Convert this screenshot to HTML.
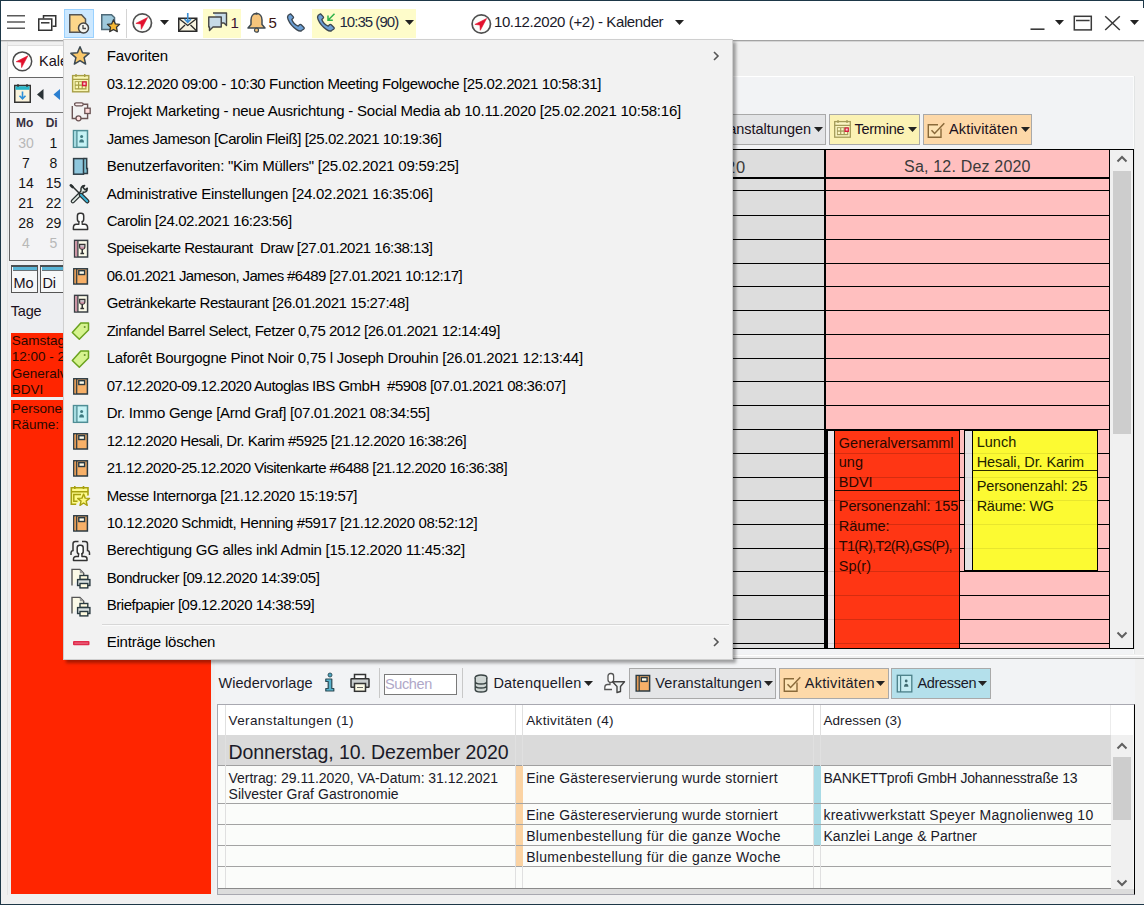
<!DOCTYPE html>
<html><head><meta charset="utf-8"><style>
html,body{margin:0;padding:0;}
body{width:1144px;height:905px;overflow:hidden;position:relative;font-family:"Liberation Sans",sans-serif;}
.a{position:absolute;}
.t{position:absolute;white-space:pre;line-height:20px;}
svg.a{overflow:visible;}
</style></head><body>
<div class="a" style="left:0px;top:0px;width:1144px;height:905px;background:#f0f0f0;"></div>
<div class="a" style="left:1px;top:1px;width:1143px;height:39px;background:#ffffff;"></div>
<div class="a" style="left:1px;top:40px;width:1143px;height:1px;background:#a3a3a3;"></div>
<div class="a" style="left:1px;top:41px;width:1143px;height:1px;background:#d6d6d6;"></div>
<div class="a" style="left:215px;top:76px;width:920px;height:578px;background:#f2f3f5;"></div>
<div class="a" style="left:215px;top:76px;width:920px;height:1px;background:#ffffff;"></div>
<div class="a" style="left:1133px;top:76px;width:1px;height:578px;background:#fafbfb;"></div>
<div class="a" style="left:1134px;top:76px;width:1px;height:578px;background:#e2e4e4;"></div>
<div class="a" style="left:600px;top:114px;width:226px;height:31px;background:#e3e4e6;border:1px solid #a9a9a9;box-sizing:border-box;"></div>
<div class="a" style="left:829px;top:114px;width:91px;height:31px;background:#fbf2b4;border:1px solid #a9a9a9;box-sizing:border-box;"></div>
<div class="a" style="left:923px;top:114px;width:109px;height:31px;background:#fdd8a8;border:1px solid #a9a9a9;box-sizing:border-box;"></div>
<div class="a" style="left:250px;top:149px;width:884px;height:500px;background:#000;"></div>
<div class="a" style="left:251px;top:150px;width:573px;height:498px;background:#dddddd;"></div>
<div class="a" style="left:826px;top:150px;width:283px;height:498px;background:#ffbfbf;"></div>
<div class="a" style="left:1110px;top:150px;width:23px;height:498px;background:#f0f0f0;"></div>
<div class="a" style="left:1113px;top:171px;width:18px;height:263px;background:#cdcdcd;"></div>
<div class="a" style="left:250px;top:177px;width:859px;height:2px;background:#000;"></div>
<div class="a" style="left:250px;top:190px;width:859px;height:1px;background:#000;"></div>
<div class="a" style="left:250px;top:215px;width:859px;height:1px;background:#000;"></div>
<div class="a" style="left:250px;top:239px;width:859px;height:1px;background:#000;"></div>
<div class="a" style="left:250px;top:263px;width:859px;height:1px;background:#000;"></div>
<div class="a" style="left:250px;top:286px;width:859px;height:1px;background:#000;"></div>
<div class="a" style="left:250px;top:310px;width:859px;height:1px;background:#000;"></div>
<div class="a" style="left:250px;top:334px;width:859px;height:1px;background:#000;"></div>
<div class="a" style="left:250px;top:358px;width:859px;height:1px;background:#000;"></div>
<div class="a" style="left:250px;top:381px;width:859px;height:1px;background:#000;"></div>
<div class="a" style="left:250px;top:405px;width:859px;height:1px;background:#000;"></div>
<div class="a" style="left:250px;top:429px;width:859px;height:1px;background:#000;"></div>
<div class="a" style="left:250px;top:453px;width:859px;height:1px;background:#000;"></div>
<div class="a" style="left:250px;top:477px;width:859px;height:1px;background:#000;"></div>
<div class="a" style="left:250px;top:500px;width:859px;height:1px;background:#000;"></div>
<div class="a" style="left:250px;top:524px;width:859px;height:1px;background:#000;"></div>
<div class="a" style="left:250px;top:548px;width:859px;height:1px;background:#000;"></div>
<div class="a" style="left:250px;top:571px;width:859px;height:1px;background:#000;"></div>
<div class="a" style="left:250px;top:595px;width:859px;height:1px;background:#000;"></div>
<div class="a" style="left:250px;top:619px;width:859px;height:1px;background:#000;"></div>
<div class="a" style="left:250px;top:643px;width:859px;height:1px;background:#000;"></div>
<svg class="a" style="left:1115px;top:152px" width="14" height="14" viewBox="0 0 14 14"><path d="M2.5 9.5 L7 5 L11.5 9.5" fill="none" stroke="#606060" stroke-width="2"/></svg>
<svg class="a" style="left:1115px;top:628px" width="14" height="14" viewBox="0 0 14 14"><path d="M2.5 4.5 L7 9 L11.5 4.5" fill="none" stroke="#606060" stroke-width="2"/></svg>
<div class="a" style="left:212px;top:655px;width:932px;height:1px;background:#ffffff;"></div>
<div class="a" style="left:212px;top:658px;width:932px;height:1px;background:#a0a0a0;"></div>
<div class="a" style="left:215px;top:659px;width:920px;height:236px;background:#f2f3f5;"></div>
<div class="a" style="left:629px;top:668px;width:147px;height:31px;background:#e4e5e7;border:1px solid #a9a9a9;box-sizing:border-box;"></div>
<div class="a" style="left:779px;top:668px;width:110px;height:31px;background:#fdd9a9;border:1px solid #a9a9a9;box-sizing:border-box;"></div>
<div class="a" style="left:891px;top:668px;width:100px;height:31px;background:#b4e0eb;border:1px solid #a9a9a9;box-sizing:border-box;"></div>
<div class="a" style="left:379px;top:668px;width:1px;height:30px;background:#c8c8c8;"></div>
<div class="a" style="left:462px;top:668px;width:1px;height:30px;background:#c8c8c8;"></div>
<div class="a" style="left:384px;top:674px;width:73px;height:21px;background:#ffffff;border:1px solid #7a7a7a;box-sizing:border-box;"></div>
<div class="a" style="left:217px;top:704px;width:918px;height:191px;background:#f8f8f6;border:1px solid #a8a8b0;box-sizing:border-box;border-right:1px solid #000;"></div>
<div class="a" style="left:218px;top:705px;width:915px;height:30px;background:#ffffff;"></div>
<div class="a" style="left:1110px;top:705px;width:1px;height:30px;background:#ececec;"></div>
<div class="a" style="left:218px;top:735px;width:893px;height:30px;background:#dadada;"></div>
<div class="a" style="left:218px;top:765px;width:893px;height:1px;background:#a0a0a0;"></div>
<div class="a" style="left:218px;top:766px;width:893px;height:37px;background:#fbfcfa;"></div>
<div class="a" style="left:218px;top:804px;width:893px;height:20px;background:#fbfcfa;"></div>
<div class="a" style="left:218px;top:825px;width:893px;height:20px;background:#fbfcfa;"></div>
<div class="a" style="left:218px;top:846px;width:893px;height:20px;background:#fbfcfa;"></div>
<div class="a" style="left:218px;top:867px;width:893px;height:21px;background:#fbfcfa;"></div>
<div class="a" style="left:218px;top:803px;width:893px;height:1px;background:#a3a3a3;"></div>
<div class="a" style="left:218px;top:824px;width:893px;height:1px;background:#a3a3a3;"></div>
<div class="a" style="left:218px;top:845px;width:893px;height:1px;background:#a3a3a3;"></div>
<div class="a" style="left:218px;top:866px;width:893px;height:1px;background:#a3a3a3;"></div>
<div class="a" style="left:218px;top:888px;width:893px;height:1px;background:#8a8a8a;"></div>
<div class="a" style="left:218px;top:889px;width:916px;height:5px;background:#dcdcdc;"></div>
<div class="a" style="left:225px;top:705px;width:1px;height:183px;background:#e0e0e0;"></div>
<div class="a" style="left:515px;top:705px;width:1px;height:183px;background:#e0e0e0;"></div>
<div class="a" style="left:522px;top:705px;width:1px;height:183px;background:#e0e0e0;"></div>
<div class="a" style="left:813px;top:705px;width:1px;height:183px;background:#e0e0e0;"></div>
<div class="a" style="left:820px;top:705px;width:1px;height:183px;background:#e0e0e0;"></div>
<div class="a" style="left:516px;top:766px;width:7px;height:100px;background:#fbd3a3;"></div>
<div class="a" style="left:516px;top:803px;width:7px;height:1px;background:#a3a3a3;"></div>
<div class="a" style="left:516px;top:824px;width:7px;height:1px;background:#a3a3a3;"></div>
<div class="a" style="left:516px;top:845px;width:7px;height:1px;background:#a3a3a3;"></div>
<div class="a" style="left:814px;top:766px;width:7px;height:79px;background:#a8dbe6;"></div>
<div class="a" style="left:814px;top:803px;width:7px;height:1px;background:#a3a3a3;"></div>
<div class="a" style="left:814px;top:824px;width:7px;height:1px;background:#a3a3a3;"></div>
<div class="a" style="left:1111px;top:735px;width:22px;height:154px;background:#f0f0f0;"></div>
<div class="a" style="left:1113px;top:757px;width:18px;height:63px;background:#cdcdcd;"></div>
<svg class="a" style="left:1115px;top:739px" width="14" height="14" viewBox="0 0 14 14"><path d="M2.5 9.5 L7 5 L11.5 9.5" fill="none" stroke="#606060" stroke-width="2"/></svg>
<svg class="a" style="left:1115px;top:876px" width="14" height="14" viewBox="0 0 14 14"><path d="M2.5 4.5 L7 9 L11.5 4.5" fill="none" stroke="#606060" stroke-width="2"/></svg>
<div class="t" style="left:904.10px;top:157.16px;font-size:16px;color:#3a3a3a;letter-spacing:0.184px;">Sa, 12. Dez 2020</div>
<div class="t" style="left:613.40px;top:156.98px;font-size:16.5px;color:#3a3a3a;letter-spacing:0.729px;">Fr, 11. Dez 2020</div>
<div class="a" style="left:826px;top:430px;width:134px;height:218px;background:#000;"></div>
<div class="a" style="left:828px;top:431px;width:6px;height:217px;background:#ebe6ea;"></div>
<div class="a" style="left:835px;top:431px;width:124px;height:217px;background:#ff3614;"></div>
<div class="a" style="left:835px;top:490px;width:124px;height:1px;background:#2a0a00;"></div>
<div class="a" style="left:835px;top:453px;width:124px;height:1px;background:rgba(0,0,0,0.16);"></div>
<div class="a" style="left:828px;top:453px;width:6px;height:1px;background:rgba(0,0,0,0.10);"></div>
<div class="a" style="left:835px;top:477px;width:124px;height:1px;background:rgba(0,0,0,0.16);"></div>
<div class="a" style="left:828px;top:477px;width:6px;height:1px;background:rgba(0,0,0,0.10);"></div>
<div class="a" style="left:835px;top:500px;width:124px;height:1px;background:rgba(0,0,0,0.16);"></div>
<div class="a" style="left:828px;top:500px;width:6px;height:1px;background:rgba(0,0,0,0.10);"></div>
<div class="a" style="left:835px;top:524px;width:124px;height:1px;background:rgba(0,0,0,0.16);"></div>
<div class="a" style="left:828px;top:524px;width:6px;height:1px;background:rgba(0,0,0,0.10);"></div>
<div class="a" style="left:835px;top:548px;width:124px;height:1px;background:rgba(0,0,0,0.16);"></div>
<div class="a" style="left:828px;top:548px;width:6px;height:1px;background:rgba(0,0,0,0.10);"></div>
<div class="a" style="left:835px;top:571px;width:124px;height:1px;background:rgba(0,0,0,0.16);"></div>
<div class="a" style="left:828px;top:571px;width:6px;height:1px;background:rgba(0,0,0,0.10);"></div>
<div class="a" style="left:835px;top:595px;width:124px;height:1px;background:rgba(0,0,0,0.16);"></div>
<div class="a" style="left:828px;top:595px;width:6px;height:1px;background:rgba(0,0,0,0.10);"></div>
<div class="a" style="left:835px;top:619px;width:124px;height:1px;background:rgba(0,0,0,0.16);"></div>
<div class="a" style="left:828px;top:619px;width:6px;height:1px;background:rgba(0,0,0,0.10);"></div>
<div class="a" style="left:835px;top:643px;width:124px;height:1px;background:rgba(0,0,0,0.16);"></div>
<div class="a" style="left:828px;top:643px;width:6px;height:1px;background:rgba(0,0,0,0.10);"></div>
<div class="a" style="left:826px;top:648px;width:134px;height:1px;background:#000;"></div>
<div class="t" style="left:838.80px;top:432.58px;font-size:14.5px;color:#2a0800;letter-spacing:0.027px;">Generalversamml</div>
<div class="t" style="left:838.80px;top:451.98px;font-size:14.5px;color:#2a0800;letter-spacing:0.000px;">ung</div>
<div class="t" style="left:838.80px;top:471.98px;font-size:14.5px;color:#2a0800;letter-spacing:0.000px;">BDVI</div>
<div class="t" style="left:838.80px;top:495.68px;font-size:14.5px;color:#2a0800;letter-spacing:-0.089px;">Personenzahl: 155</div>
<div class="t" style="left:838.80px;top:516.18px;font-size:14.5px;color:#2a0800;letter-spacing:0.000px;">Räume:</div>
<div class="t" style="left:838.80px;top:536.48px;font-size:14.5px;color:#2a0800;letter-spacing:-0.745px;">T1(R),T2(R),GS(P),</div>
<div class="t" style="left:838.80px;top:555.98px;font-size:14.5px;color:#2a0800;letter-spacing:0.000px;">Sp(r)</div>
<div class="a" style="left:964px;top:430px;width:134px;height:142px;background:#000;"></div>
<div class="a" style="left:965px;top:431px;width:6.5px;height:139px;background:#e4e2e4;"></div>
<div class="a" style="left:972.5px;top:431px;width:124px;height:139px;background:#fcfa32;"></div>
<div class="a" style="left:972px;top:470px;width:125px;height:1px;background:#2a2a00;"></div>
<div class="a" style="left:972.5px;top:453px;width:124px;height:1px;background:rgba(0,0,0,0.08);"></div>
<div class="a" style="left:965px;top:453px;width:6.5px;height:1px;background:rgba(0,0,0,0.08);"></div>
<div class="a" style="left:972.5px;top:477px;width:124px;height:1px;background:rgba(0,0,0,0.08);"></div>
<div class="a" style="left:965px;top:477px;width:6.5px;height:1px;background:rgba(0,0,0,0.08);"></div>
<div class="a" style="left:972.5px;top:500px;width:124px;height:1px;background:rgba(0,0,0,0.08);"></div>
<div class="a" style="left:965px;top:500px;width:6.5px;height:1px;background:rgba(0,0,0,0.08);"></div>
<div class="a" style="left:972.5px;top:524px;width:124px;height:1px;background:rgba(0,0,0,0.08);"></div>
<div class="a" style="left:965px;top:524px;width:6.5px;height:1px;background:rgba(0,0,0,0.08);"></div>
<div class="a" style="left:972.5px;top:548px;width:124px;height:1px;background:rgba(0,0,0,0.08);"></div>
<div class="a" style="left:965px;top:548px;width:6.5px;height:1px;background:rgba(0,0,0,0.08);"></div>
<div class="t" style="left:976.70px;top:432.28px;font-size:14.5px;color:#222200;letter-spacing:0.000px;">Lunch</div>
<div class="t" style="left:976.70px;top:451.98px;font-size:14.5px;color:#222200;letter-spacing:-0.093px;">Hesali, Dr. Karim</div>
<div class="t" style="left:976.70px;top:475.98px;font-size:14.5px;color:#222200;letter-spacing:-0.137px;">Personenzahl: 25</div>
<div class="t" style="left:976.70px;top:495.58px;font-size:14.5px;color:#222200;letter-spacing:-0.296px;">Räume: WG</div>
<div class="t" style="left:706.39px;top:118.98px;font-size:14.5px;color:#1a1020;letter-spacing:0.000px;">Veranstaltungen</div>
<svg class="a" style="left:814px;top:126.5px" width="9" height="5" viewBox="0 0 9 5"><path d="M0 0H9L4.5 5Z" fill="#222"/></svg>
<svg class="a" style="left:833px;top:119px" width="19" height="19" viewBox="0 0 19 19"><rect x="1.7" y="2.6" width="15.6" height="15.6" fill="#fbf6c4" stroke="#a49c5a" stroke-width="1.3"/><path d="M1.7 6.3H17.3M5 1V4M14 1V4" stroke="#a49c5a" stroke-width="1.3"/><rect x="3.9" y="8.2" width="11.4" height="8" fill="#a49c5a"/><rect x="4.8" y="9.1" width="2.3" height="2.3" fill="#fbf6c4"/><rect x="4.8" y="12.7" width="2.3" height="2.3" fill="#fbf6c4"/><rect x="8.3" y="9.1" width="2.3" height="2.3" fill="#fbf6c4"/><rect x="8.3" y="12.7" width="2.3" height="2.3" fill="#fbf6c4"/><rect x="11.8" y="9.1" width="2.3" height="2.3" fill="#fbf6c4"/><rect x="11.8" y="12.7" width="2.3" height="2.3" fill="#fbf6c4"/><rect x="11.5" y="8.4" width="4.4" height="4.6" fill="#d81b3c"/><rect x="12.7" y="9.6" width="2" height="2" fill="#f8d0d8"/></svg>
<div class="t" style="left:854.40px;top:118.98px;font-size:14.5px;color:#1a1020;letter-spacing:-0.230px;">Termine</div>
<svg class="a" style="left:908px;top:126.5px" width="9" height="5" viewBox="0 0 9 5"><path d="M0 0H9L4.5 5Z" fill="#222"/></svg>
<svg class="a" style="left:927px;top:120px" width="19" height="19" viewBox="0 0 19 19"><path d="M14 8.5V17.2H1.3V4.8H11" fill="#fde3b4" stroke="#8a6a3a" stroke-width="1.4"/><path d="M4.5 10.2L7.6 13.4L17.3 3.2" fill="none" stroke="#8a6a3a" stroke-width="1.5"/></svg>
<div class="t" style="left:948.90px;top:118.98px;font-size:14.5px;color:#1a1020;letter-spacing:0.179px;">Aktivitäten</div>
<svg class="a" style="left:1021px;top:126.5px" width="9" height="5" viewBox="0 0 9 5"><path d="M0 0H9L4.5 5Z" fill="#222"/></svg>
<div class="t" style="left:218.40px;top:673.18px;font-size:14.5px;color:#1a1a28;letter-spacing:0.058px;">Wiedervorlage</div>
<svg class="a" style="left:322px;top:671px" width="16" height="22" viewBox="0 0 16 22"><circle cx="8" cy="4" r="2" fill="#4aa3bf" stroke="#2a4a55" stroke-width="0.9"/><path d="M3.8 8H9.8V17.5H11.8V20H3.8V17.5H6.2V10.5H3.8Z" fill="#58b2cc" stroke="#2a4a55" stroke-width="1.2" stroke-linejoin="round"/></svg>
<svg class="a" style="left:350px;top:673px" width="20" height="20" viewBox="0 0 20 20"><rect x="4.5" y="1.5" width="11" height="5" fill="#fff" stroke="#333" stroke-width="1.5"/><rect x="1" y="5.8" width="18" height="8.5" rx="0.6" fill="#c9cdcd" stroke="#333" stroke-width="1.5"/><rect x="4.5" y="10.5" width="11" height="7.8" fill="#fdfbe6" stroke="#333" stroke-width="1.5"/><path d="M7 14.5H13" stroke="#666" stroke-width="1"/></svg>
<div class="t" style="left:384.90px;top:674.48px;font-size:14.5px;color:#b0a8c8;letter-spacing:-0.337px;">Suchen</div>
<svg class="a" style="left:474px;top:674px" width="14" height="19" viewBox="0 0 14 19"><ellipse cx="7" cy="3.5" rx="5.8" ry="2.5" fill="#cfd6d4" stroke="#3a4444" stroke-width="1.4"/><path d="M1.2 3.5V15.5C1.2 17 3.8 18 7 18C10.2 18 12.8 17 12.8 15.5V3.5M1.2 7.5C1.2 9 3.8 10 7 10C10.2 10 12.8 9 12.8 7.5M1.2 11.5C1.2 13 3.8 14 7 14C10.2 14 12.8 13 12.8 11.5" fill="#cfd6d4" stroke="#3a4444" stroke-width="1.4"/></svg>
<div class="t" style="left:493.40px;top:673.18px;font-size:14.5px;color:#1a1a28;letter-spacing:0.221px;">Datenquellen</div>
<svg class="a" style="left:584px;top:681px" width="9" height="5" viewBox="0 0 9 5"><path d="M0 0H9L4.5 5Z" fill="#222"/></svg>
<svg class="a" style="left:602px;top:671px" width="24" height="22" viewBox="0 0 24 22"><path d="M8 11V13.5H5.5C3.8 13.5 2.8 14.8 2.8 16.5V18.5H10" fill="#fff" stroke="#555" stroke-width="1.3"/><rect x="6" y="2.5" width="5.6" height="8.8" rx="2.5" fill="#fff" stroke="#555" stroke-width="1.3"/><path d="M10.5 10.8H22.5L18.5 15.5V20.5L15 21.5V15.5Z" fill="#eef2f2" stroke="#444" stroke-width="1.4" stroke-linejoin="round"/></svg>
<svg class="a" style="left:635px;top:674px" width="16" height="19" viewBox="0 0 16 19"><rect x="1.2" y="1.5" width="13.4" height="15.5" fill="#f7b068" stroke="#2b3a42" stroke-width="1.5"/><rect x="1.9" y="2.2" width="2.1" height="14.1" fill="#e49a55"/><path d="M4.2 1.5V17" stroke="#2b3a42" stroke-width="1.2"/><rect x="6.3" y="3.6" width="5.8" height="3.8" fill="#fffbe8" stroke="#2b3a42" stroke-width="1.4"/></svg>
<div class="t" style="left:655.30px;top:673.18px;font-size:14.5px;color:#1a1a28;letter-spacing:0.121px;">Veranstaltungen</div>
<svg class="a" style="left:764px;top:681px" width="9" height="5" viewBox="0 0 9 5"><path d="M0 0H9L4.5 5Z" fill="#222"/></svg>
<svg class="a" style="left:783px;top:674px" width="19" height="19" viewBox="0 0 19 19"><path d="M14 8.5V17.2H1.3V4.8H11" fill="#fde3b4" stroke="#8a6a3a" stroke-width="1.4"/><path d="M4.5 10.2L7.6 13.4L17.3 3.2" fill="none" stroke="#8a6a3a" stroke-width="1.5"/></svg>
<div class="t" style="left:804.80px;top:673.18px;font-size:14.5px;color:#1a1a28;letter-spacing:0.289px;">Aktivitäten</div>
<svg class="a" style="left:876px;top:681px" width="9" height="5" viewBox="0 0 9 5"><path d="M0 0H9L4.5 5Z" fill="#222"/></svg>
<svg class="a" style="left:896px;top:674px" width="18" height="20" viewBox="0 0 18 20"><rect x="1.3" y="1.3" width="14.5" height="16.6" fill="#c6ecf2" stroke="#4b7f88" stroke-width="1.3"/><path d="M4.6 1.3V17.9" stroke="#4b7f88" stroke-width="1.2"/><circle cx="10.2" cy="7" r="1.4" fill="#3f6a70"/><path d="M8 12.8C8 10.8 9 9.8 10.2 9.8C11.4 9.8 12.4 10.8 12.4 12.8Z" fill="#3f6a70"/></svg>
<div class="t" style="left:917.40px;top:673.18px;font-size:14.5px;color:#1a1a28;letter-spacing:-0.295px;">Adressen</div>
<svg class="a" style="left:978px;top:681px" width="9" height="5" viewBox="0 0 9 5"><path d="M0 0H9L4.5 5Z" fill="#222"/></svg>
<div class="t" style="left:228.50px;top:710.62px;font-size:13.5px;color:#1a1a28;letter-spacing:0.398px;">Veranstaltungen (1)</div>
<div class="t" style="left:526.20px;top:710.62px;font-size:13.5px;color:#1a1a28;letter-spacing:0.348px;">Aktivitäten (4)</div>
<div class="t" style="left:823.40px;top:710.62px;font-size:13.5px;color:#1a1a28;letter-spacing:0.082px;">Adressen (3)</div>
<div class="t" style="left:228.50px;top:742.04px;font-size:19.5px;color:#1a1a28;letter-spacing:-0.104px;">Donnerstag, 10. Dezember 2020</div>
<div class="t" style="left:228.50px;top:767.75px;font-size:14px;color:#1a1a28;letter-spacing:-0.038px;">Vertrag: 29.11.2020, VA-Datum: 31.12.2021</div>
<div class="t" style="left:228.50px;top:783.85px;font-size:14px;color:#1a1a28;letter-spacing:0.050px;">Silvester Graf Gastronomie</div>
<div class="t" style="left:526.20px;top:767.75px;font-size:14px;color:#1a1a28;letter-spacing:0.212px;">Eine Gästereservierung wurde storniert</div>
<div class="t" style="left:526.20px;top:805.15px;font-size:14px;color:#1a1a28;letter-spacing:0.212px;">Eine Gästereservierung wurde storniert</div>
<div class="t" style="left:526.20px;top:826.15px;font-size:14px;color:#1a1a28;letter-spacing:0.316px;">Blumenbestellung für die ganze Woche</div>
<div class="t" style="left:526.20px;top:847.15px;font-size:14px;color:#1a1a28;letter-spacing:0.316px;">Blumenbestellung für die ganze Woche</div>
<div class="t" style="left:823.40px;top:767.75px;font-size:14px;color:#1a1a28;letter-spacing:-0.167px;">BANKETTprofi GmbH Johannesstraße 13</div>
<div class="t" style="left:823.40px;top:805.15px;font-size:14px;color:#1a1a28;letter-spacing:0.281px;">kreativwerkstatt Speyer Magnolienweg 10</div>
<div class="t" style="left:823.40px;top:826.15px;font-size:14px;color:#1a1a28;letter-spacing:0.083px;">Kanzlei Lange &amp; Partner</div>
<svg class="a" style="left:7px;top:14px" width="18" height="16" viewBox="0 0 18 16"><path d="M0 1.7H18M0 8H18M0 14.3H18" stroke="#5a5a5a" stroke-width="1.5"/></svg>
<svg class="a" style="left:38px;top:15px" width="19" height="16" viewBox="0 0 19 16"><path d="M5.5 3.5V0.75H17.75V11.25H14.5" fill="none" stroke="#333" stroke-width="1.5"/><rect x="0.75" y="4" width="13" height="11.25" fill="#fff" stroke="#333" stroke-width="1.5"/><path d="M3 7.8H11.5" stroke="#333" stroke-width="1.5"/></svg>
<div class="a" style="left:64px;top:9px;width:30px;height:29px;background:#cce8ff;border:1px solid #99d1ff;box-sizing:border-box;"></div>
<svg class="a" style="left:69px;top:14px" width="21" height="20" viewBox="0 0 21 20"><path d="M0.75 0.75H12.5L16.5 5V18.25H0.75Z" fill="#fcd68a" stroke="#555" stroke-width="1.5"/><circle cx="14.5" cy="14" r="5" fill="#f5f5f0" stroke="#444" stroke-width="1.5"/><path d="M14 11V14.5H17" fill="none" stroke="#444" stroke-width="1.3"/></svg>
<svg class="a" style="left:101px;top:14px" width="20" height="20" viewBox="0 0 20 20"><path d="M0.75 0.75H10.5L13.5 3.5V15.5H0.75Z" fill="#9ec9dc" stroke="#4e6a78" stroke-width="1.5"/><path d="M12.5 5.8L14.4 9.9L18.6 10.4L15.5 13.3L16.3 17.6L12.5 15.5L8.7 17.6L9.5 13.3L6.4 10.4L10.6 9.9Z" fill="#f7b834" stroke="#333" stroke-width="1.3" stroke-linejoin="round"/></svg>
<div class="a" style="left:126px;top:9px;width:1px;height:29px;background:#d4d4d4;"></div>
<svg class="a" style="left:132px;top:13px" width="20" height="20" viewBox="0 0 20 20"><circle cx="10.3" cy="10" r="9.2" fill="#fbfdfb" stroke="#505050" stroke-width="1.7"/><path d="M15.6 4.5L3.9 10.4L8.9 11L9.3 16.3Z" fill="#e2102c" stroke="#e2102c" stroke-width="0.6" stroke-linejoin="round"/></svg>
<svg class="a" style="left:160px;top:20px" width="9" height="5" viewBox="0 0 9 5"><path d="M0 0H9L4.5 5Z" fill="#222"/></svg>
<svg class="a" style="left:178px;top:13px" width="20" height="20" viewBox="0 0 20 20"><rect x="0.75" y="5.25" width="18" height="13" fill="#f7f3e0" stroke="#2a2a2a" stroke-width="1.5"/><path d="M0.75 5.5L9.75 12.5L18.75 5.5M0.75 18L7 12M18.75 18L12.5 12" fill="none" stroke="#2a2a2a" stroke-width="1.3"/><path d="M9.75 0V9M6.5 6L9.75 9.3L13 6" fill="none" stroke="#3b8fd6" stroke-width="1.6"/></svg>
<div class="a" style="left:203px;top:9px;width:38px;height:29px;background:#fefcca;"></div>
<svg class="a" style="left:208px;top:12px" width="20" height="20" viewBox="0 0 20 20"><path d="M5 1H18.5V13.5L16 11H13" fill="#c7dbe8" stroke="#444" stroke-width="1.4" stroke-linejoin="round"/><path d="M0.75 5H13.25V15H5L1.5 18.5V15H0.75Z" fill="#c7dbe8" stroke="#444" stroke-width="1.4" stroke-linejoin="round"/></svg>
<div class="t" style="left:230.40px;top:12.80px;font-size:15px;color:#3a1432;letter-spacing:0.000px;">1</div>
<svg class="a" style="left:247px;top:12px" width="19" height="21" viewBox="0 0 19 21"><path d="M9.5 1.5C6 1.5 4 4.3 4 8V12.5L1 16H18L15 12.5V8C15 4.3 13 1.5 9.5 1.5Z" fill="#f6c57c" stroke="#3f4a52" stroke-width="1.5" stroke-linejoin="round"/><circle cx="9.5" cy="18.2" r="2" fill="#f6c57c" stroke="#3f4a52" stroke-width="1.2"/><circle cx="9.5" cy="1.6" r="1.2" fill="#3f4a52"/></svg>
<div class="t" style="left:268.40px;top:12.80px;font-size:15px;color:#3a1412;letter-spacing:0.000px;">5</div>
<svg class="a" style="left:287px;top:13px" width="19" height="19" viewBox="0 0 19 19"><path d="M3.5 0.8L6.2 3.6C6.7 4.1 6.6 4.8 6.1 5.3L4.8 6.5C5.8 9.3 8.2 11.9 11.2 13.1L12.5 11.8C13 11.3 13.7 11.3 14.2 11.8L17 14.5C17.4 14.9 17.3 15.5 16.9 15.9L14.6 17.6C13.6 18.3 11.8 18 9.6 16.6C5.9 14.2 2.6 10.4 1.1 6.6C0.3 4.6 0.4 3.1 1.2 2.2Z" fill="#6b9fd6" stroke="#3b4650" stroke-width="1.3" stroke-linejoin="round"/></svg>
<div class="a" style="left:312px;top:9px;width:104px;height:29px;background:#fefcca;"></div>
<svg class="a" style="left:317px;top:13px" width="19" height="19" viewBox="0 0 19 19"><path d="M3.5 0.8L6.2 3.6C6.7 4.1 6.6 4.8 6.1 5.3L4.8 6.5C5.8 9.3 8.2 11.9 11.2 13.1L12.5 11.8C13 11.3 13.7 11.3 14.2 11.8L17 14.5C17.4 14.9 17.3 15.5 16.9 15.9L14.6 17.6C13.6 18.3 11.8 18 9.6 16.6C5.9 14.2 2.6 10.4 1.1 6.6C0.3 4.6 0.4 3.1 1.2 2.2Z" fill="#6b9fd6" stroke="#3b4650" stroke-width="1.3" stroke-linejoin="round"/><path d="M17.5 0.8L11 7.3M11 2.5V7.3H15.8" fill="none" stroke="#2fb24a" stroke-width="1.5"/></svg>
<div class="t" style="left:339.40px;top:12.40px;font-size:15px;color:#1e2a40;letter-spacing:-0.955px;">10:35 (90)</div>
<svg class="a" style="left:405px;top:20px" width="9" height="5" viewBox="0 0 9 5"><path d="M0 0H9L4.5 5Z" fill="#222"/></svg>
<svg class="a" style="left:471px;top:14px" width="20" height="20" viewBox="0 0 20 20"><circle cx="10.3" cy="10" r="9.2" fill="#fbfdfb" stroke="#505050" stroke-width="1.7"/><path d="M15.6 4.5L3.9 10.4L8.9 11L9.3 16.3Z" fill="#e2102c" stroke="#e2102c" stroke-width="0.6" stroke-linejoin="round"/></svg>
<div class="t" style="left:494.00px;top:12.20px;font-size:15px;color:#1a1a2a;letter-spacing:-0.405px;">10.12.2020 (+2) - Kalender</div>
<svg class="a" style="left:675px;top:20px" width="9" height="5" viewBox="0 0 9 5"><path d="M0 0H9L4.5 5Z" fill="#222"/></svg>
<svg class="a" style="left:1030px;top:27px" width="15" height="4" viewBox="0 0 15 4"><path d="M0.5 2.2H14.5" stroke="#3a3a3a" stroke-width="1.6"/></svg>
<svg class="a" style="left:1055px;top:20px" width="9" height="5" viewBox="0 0 9 5"><path d="M0 0H9L4.5 5Z" fill="#222"/></svg>
<svg class="a" style="left:1073px;top:15px" width="20" height="16" viewBox="0 0 20 16"><rect x="1.3" y="1.3" width="17" height="13.6" fill="none" stroke="#3a3a3a" stroke-width="1.5"/><path d="M3 5.5H16.6" stroke="#3a3a3a" stroke-width="1.5"/></svg>
<svg class="a" style="left:1104px;top:15px" width="17" height="16" viewBox="0 0 17 16"><path d="M1.2 1.2L15.8 15M15.8 1.2L1.2 15" stroke="#3a3a3a" stroke-width="1.5"/></svg>
<svg class="a" style="left:1130px;top:20px" width="9" height="5" viewBox="0 0 9 5"><path d="M0 0H9L4.5 5Z" fill="#222"/></svg>
<div class="a" style="left:7px;top:42px;width:1px;height:853px;background:#e3e3e3;"></div>
<div class="a" style="left:9px;top:262px;width:203px;height:632px;background:#edeef1;"></div>
<div class="a" style="left:8px;top:46px;width:60px;height:31px;background:#fdfdfd;"></div>
<div class="a" style="left:8px;top:45px;width:60px;height:1px;background:#dedede;"></div>
<div class="a" style="left:7px;top:45px;width:1px;height:32px;background:#dedede;"></div>
<svg class="a" style="left:12px;top:51px" width="21" height="21" viewBox="0 0 21 21"><circle cx="10.3" cy="10.3" r="9.4" fill="#fff" stroke="#4a4a4a" stroke-width="1.5"/><path d="M15.9 4.8L4.2 10.7L9.2 11.3L9.6 16.6Z" fill="#e2102c" stroke="#e2102c" stroke-width="0.6" stroke-linejoin="round"/></svg>
<div class="t" style="left:39.00px;top:50.98px;font-size:14.5px;color:#1a1020;letter-spacing:0.000px;">Kale</div>
<div class="a" style="left:9px;top:77px;width:60px;height:184px;background:#f3f3f5;"></div>
<div class="a" style="left:9px;top:77px;width:1px;height:184px;background:#666;"></div>
<div class="a" style="left:9px;top:77px;width:60px;height:1px;background:#666;"></div>
<div class="a" style="left:9px;top:260px;width:60px;height:1px;background:#666;"></div>
<div class="a" style="left:10px;top:112px;width:58px;height:1px;background:#777;"></div>
<svg class="a" style="left:14px;top:84px" width="17" height="19" viewBox="0 0 17 19"><rect x="0.75" y="1.5" width="15.5" height="16.75" fill="#fbf4dd" stroke="#333" stroke-width="1.5"/><rect x="1.5" y="2.2" width="14" height="3.6" fill="#27b5c9"/><path d="M4 0V3M13 0V3" stroke="#333" stroke-width="1.3"/><path d="M8.5 7.5V14.5M5.5 11.8L8.5 14.8L11.5 11.8" fill="none" stroke="#2d8fd8" stroke-width="1.6"/></svg>
<svg class="a" style="left:37px;top:89px" width="7" height="11" viewBox="0 0 7 11"><path d="M6.5 0V11L0 5.5Z" fill="#2a3236"/></svg>
<svg class="a" style="left:53px;top:89px" width="7" height="11" viewBox="0 0 7 11"><path d="M7 0V11L0.5 5.5Z" fill="#2b7fd0"/></svg>
<div class="t" style="left:16.00px;top:113.44px;font-size:12px;color:#383040;letter-spacing:0.000px;font-weight:700;">Mo</div>
<div class="t" style="left:45.70px;top:113.44px;font-size:12px;color:#383040;letter-spacing:0.000px;font-weight:700;">Di</div>
<div class="t" style="left:18.21px;top:132.65px;font-size:14px;color:#b8b8b8;letter-spacing:0.000px;">30</div>
<div class="t" style="left:49.60px;top:132.65px;font-size:14px;color:#141414;letter-spacing:0.000px;">1</div>
<div class="t" style="left:22.10px;top:152.65px;font-size:14px;color:#141414;letter-spacing:0.000px;">7</div>
<div class="t" style="left:49.60px;top:152.65px;font-size:14px;color:#141414;letter-spacing:0.000px;">8</div>
<div class="t" style="left:18.21px;top:172.65px;font-size:14px;color:#141414;letter-spacing:0.000px;">14</div>
<div class="t" style="left:45.71px;top:172.65px;font-size:14px;color:#141414;letter-spacing:0.000px;">15</div>
<div class="t" style="left:18.21px;top:192.65px;font-size:14px;color:#141414;letter-spacing:0.000px;">21</div>
<div class="t" style="left:45.71px;top:192.65px;font-size:14px;color:#141414;letter-spacing:0.000px;">22</div>
<div class="t" style="left:18.21px;top:212.65px;font-size:14px;color:#141414;letter-spacing:0.000px;">28</div>
<div class="t" style="left:45.71px;top:212.65px;font-size:14px;color:#141414;letter-spacing:0.000px;">29</div>
<div class="t" style="left:22.10px;top:232.65px;font-size:14px;color:#b8b8b8;letter-spacing:0.000px;">4</div>
<div class="t" style="left:49.60px;top:232.65px;font-size:14px;color:#b8b8b8;letter-spacing:0.000px;">5</div>
<div class="a" style="left:11px;top:265px;width:27px;height:28px;background:#f6f7f8;border:1.5px solid #555;box-sizing:border-box;"></div>
<div class="a" style="left:11px;top:265px;width:27px;height:2px;background:#4a4f52;"></div>
<div class="a" style="left:12.5px;top:267px;width:24px;height:3px;background:#58b4d6;"></div>
<div class="a" style="left:12.5px;top:270px;width:24px;height:1px;background:#6a7074;"></div>
<div class="a" style="left:40px;top:265px;width:30px;height:28px;background:#f6f7f8;border:1.5px solid #555;box-sizing:border-box;"></div>
<div class="a" style="left:40px;top:265px;width:30px;height:2px;background:#4a4f52;"></div>
<div class="a" style="left:41.5px;top:267px;width:27px;height:3px;background:#58b4d6;"></div>
<div class="a" style="left:41.5px;top:270px;width:27px;height:1px;background:#6a7074;"></div>
<div class="t" style="left:13.40px;top:272.98px;font-size:14.5px;color:#1a1020;letter-spacing:0.000px;">Mo</div>
<div class="t" style="left:42.40px;top:272.98px;font-size:14.5px;color:#1a1020;letter-spacing:0.000px;">Di</div>
<div class="t" style="left:10.70px;top:301.38px;font-size:14.5px;color:#1a1020;letter-spacing:-0.184px;">Tage</div>
<div class="a" style="left:11px;top:333px;width:200px;height:64px;background:#ff2500;"></div>
<div class="a" style="left:11px;top:400px;width:200px;height:494px;background:#ff2500;"></div>
<div class="t" style="left:11.70px;top:331.12px;font-size:13.5px;color:#2a0800;letter-spacing:0.000px;">Samstag, 12.12.2020</div>
<div class="t" style="left:11.70px;top:347.32px;font-size:13.5px;color:#2a0800;letter-spacing:0.000px;">12:00 - 20:00</div>
<div class="t" style="left:11.70px;top:363.82px;font-size:13.5px;color:#2a0800;letter-spacing:0.000px;">Generalversammlung</div>
<div class="t" style="left:11.70px;top:379.62px;font-size:13.5px;color:#2a0800;letter-spacing:0.000px;">BDVI</div>
<div class="t" style="left:11.70px;top:399.02px;font-size:13.5px;color:#2a0800;letter-spacing:0.000px;">Personenzahl: 155</div>
<div class="t" style="left:11.70px;top:414.82px;font-size:13.5px;color:#2a0800;letter-spacing:0.000px;">Räume: T1(R),T2(R),GS(P),Sp(r)</div>
<div class="a" style="left:63px;top:39px;width:670px;height:621px;background:#f2f2f2;border:1px solid #cfcfcf;box-sizing:border-box;box-shadow:3px 3px 3px rgba(0,0,0,0.35);"></div>
<div class="t" style="left:106.70px;top:46.30px;font-size:15px;color:#000;letter-spacing:-0.141px;">Favoriten</div>
<div class="t" style="left:106.70px;top:73.75px;font-size:15px;color:#000;letter-spacing:-0.375px;">03.12.2020 09:00 - 10:30 Function Meeting Folgewoche [25.02.2021 10:58:31]</div>
<div class="t" style="left:106.70px;top:101.20px;font-size:15px;color:#000;letter-spacing:-0.230px;">Projekt Marketing - neue Ausrichtung - Social Media ab 10.11.2020 [25.02.2021 10:58:16]</div>
<div class="t" style="left:106.70px;top:128.65px;font-size:15px;color:#000;letter-spacing:-0.432px;">James Jameson [Carolin Fleiß] [25.02.2021 10:19:36]</div>
<div class="t" style="left:106.70px;top:156.10px;font-size:15px;color:#000;letter-spacing:-0.240px;">Benutzerfavoriten: &quot;Kim Müllers&quot; [25.02.2021 09:59:25]</div>
<div class="t" style="left:106.70px;top:183.55px;font-size:15px;color:#000;letter-spacing:-0.252px;">Administrative Einstellungen [24.02.2021 16:35:06]</div>
<div class="t" style="left:106.70px;top:211.00px;font-size:15px;color:#000;letter-spacing:-0.438px;">Carolin [24.02.2021 16:23:56]</div>
<div class="t" style="left:106.70px;top:238.45px;font-size:15px;color:#000;letter-spacing:-0.488px;">Speisekarte Restaurant  Draw [27.01.2021 16:38:13]</div>
<div class="t" style="left:106.70px;top:265.90px;font-size:15px;color:#000;letter-spacing:-0.630px;">06.01.2021 Jameson, James #6489 [27.01.2021 10:12:17]</div>
<div class="t" style="left:106.70px;top:293.35px;font-size:15px;color:#000;letter-spacing:-0.452px;">Getränkekarte Restaurant [26.01.2021 15:27:48]</div>
<div class="t" style="left:106.70px;top:320.80px;font-size:15px;color:#000;letter-spacing:-0.483px;">Zinfandel Barrel Select, Fetzer 0,75 2012 [26.01.2021 12:14:49]</div>
<div class="t" style="left:106.70px;top:348.25px;font-size:15px;color:#000;letter-spacing:-0.255px;">Laforêt Bourgogne Pinot Noir 0,75 l Joseph Drouhin [26.01.2021 12:13:44]</div>
<div class="t" style="left:106.70px;top:375.70px;font-size:15px;color:#000;letter-spacing:-0.504px;">07.12.2020-09.12.2020 Autoglas IBS GmbH  #5908 [07.01.2021 08:36:07]</div>
<div class="t" style="left:106.70px;top:403.15px;font-size:15px;color:#000;letter-spacing:-0.309px;">Dr. Immo Genge [Arnd Graf] [07.01.2021 08:34:55]</div>
<div class="t" style="left:106.70px;top:430.60px;font-size:15px;color:#000;letter-spacing:-0.505px;">12.12.2020 Hesali, Dr. Karim #5925 [21.12.2020 16:38:26]</div>
<div class="t" style="left:106.70px;top:458.05px;font-size:15px;color:#000;letter-spacing:-0.533px;">21.12.2020-25.12.2020 Visitenkarte #6488 [21.12.2020 16:36:38]</div>
<div class="t" style="left:106.70px;top:485.50px;font-size:15px;color:#000;letter-spacing:-0.434px;">Messe Internorga [21.12.2020 15:19:57]</div>
<div class="t" style="left:106.70px;top:512.95px;font-size:15px;color:#000;letter-spacing:-0.420px;">10.12.2020 Schmidt, Henning #5917 [21.12.2020 08:52:12]</div>
<div class="t" style="left:106.70px;top:540.40px;font-size:15px;color:#000;letter-spacing:-0.265px;">Berechtigung GG alles inkl Admin [15.12.2020 11:45:32]</div>
<div class="t" style="left:106.70px;top:567.85px;font-size:15px;color:#000;letter-spacing:-0.443px;">Bondrucker [09.12.2020 14:39:05]</div>
<div class="t" style="left:106.70px;top:595.30px;font-size:15px;color:#000;letter-spacing:-0.458px;">Briefpapier [09.12.2020 14:38:59]</div>
<div class="t" style="left:106.70px;top:631.80px;font-size:15px;color:#000;letter-spacing:-0.203px;">Einträge löschen</div>
<div class="a" style="left:102px;top:624px;width:627px;height:1px;background:#d7d7d7;"></div>
<div class="a" style="left:102px;top:625px;width:627px;height:1px;background:#fbfbfb;"></div>
<svg class="a" style="left:713px;top:51px" width="7" height="10" viewBox="0 0 7 10"><path d="M1 1 L5 5 L1 9" fill="none" stroke="#555" stroke-width="1.6"/></svg>
<svg class="a" style="left:713px;top:637px" width="7" height="10" viewBox="0 0 7 10"><path d="M1 1 L5 5 L1 9" fill="none" stroke="#555" stroke-width="1.6"/></svg>
<svg class="a" style="left:68px;top:44.0px" width="24" height="24" viewBox="0 0 24 24"><polygon points="12.00,2.70 14.53,8.82 21.13,9.33 16.09,13.63 17.64,20.07 12.00,16.60 6.36,20.07 7.91,13.63 2.87,9.33 9.47,8.82" fill="#f9c86a" stroke="#3d4a52" stroke-width="1.5" stroke-linejoin="round"/></svg>
<svg class="a" style="left:68px;top:72.0px" width="24" height="24" viewBox="0 0 24 24"><rect x="4.6" y="3.6" width="16.2" height="16.2" fill="#f9f7b5" stroke="#a79f45" stroke-width="1.4"/><path d="M4.6 7.4H20.8M8 2V5M16.7 2V5" stroke="#a79f45" stroke-width="1.4"/><rect x="6.7" y="9.2" width="11.8" height="8.3" fill="#a79f45"/><rect x="7.6" y="10.1" width="2.4" height="2.4" fill="#fbf8b8"/><rect x="7.6" y="13.8" width="2.4" height="2.4" fill="#fbf8b8"/><rect x="11.2" y="10.1" width="2.4" height="2.4" fill="#fbf8b8"/><rect x="11.2" y="13.8" width="2.4" height="2.4" fill="#fbf8b8"/><rect x="14.8" y="10.1" width="2.4" height="2.4" fill="#fbf8b8"/><rect x="14.8" y="13.8" width="2.4" height="2.4" fill="#fbf8b8"/><rect x="14" y="9.3" width="4.8" height="5" fill="#d81b3c"/><rect x="15.3" y="10.6" width="2.2" height="2.2" fill="#f8d0d8"/></svg>
<svg class="a" style="left:68px;top:100.0px" width="24" height="24" viewBox="0 0 24 24"><path d="M4.3 6V18.5H19.6V13.5M19.6 8V4.3H6" fill="none" stroke="#6a5454" stroke-width="1.4"/><rect x="6.6" y="2.8" width="8.6" height="3" rx="1.5" fill="#fff0f0" stroke="#6a5454" stroke-width="1.3"/><rect x="16.8" y="8.2" width="5.4" height="5.3" fill="#ffdada" stroke="#6a5454" stroke-width="1.3"/><circle cx="10.5" cy="18.3" r="2.5" fill="#ffe0e0" stroke="#6a5454" stroke-width="1.3"/></svg>
<svg class="a" style="left:68px;top:128.0px" width="24" height="24" viewBox="0 0 24 24"><rect x="5.5" y="2.6" width="14" height="16.7" fill="#c5f2f5" stroke="#4f8e96" stroke-width="1.5"/><rect x="6.2" y="3.3" width="2.6" height="15.3" fill="#a6dbe0"/><path d="M8.9 2.6V19.3" stroke="#4f8e96" stroke-width="1.3"/><circle cx="13.6" cy="8.4" r="1.5" fill="#3f7a80"/><path d="M11.2 14.6C11.2 12.4 12.2 11.3 13.6 11.3C15 11.3 16 12.4 16 14.6Z" fill="#3f7a80"/></svg>
<svg class="a" style="left:68px;top:155.0px" width="24" height="24" viewBox="0 0 24 24"><path d="M15.5 3.6H18.7V13.6H19.4V18.6H15.5" fill="#7fc0d2" stroke="#2f3d45" stroke-width="1.5"/><rect x="5.6" y="3.6" width="9.9" height="15.6" fill="#8fc7dd" stroke="#2f3d45" stroke-width="1.5"/></svg>
<svg class="a" style="left:68px;top:182.0px" width="24" height="24" viewBox="0 0 24 24"><path d="M14.3 9.8L4.8 19.3" stroke="#2a3030" stroke-width="4.2" stroke-linecap="round"/><path d="M14.3 9.8L4.8 19.3" stroke="#e2ece6" stroke-width="1.8" stroke-linecap="round"/><path d="M13.2 8.8C12.3 6.2 13.5 3.8 16.6 3.6L15 5.6L17 7.8L19.3 6.2C19.4 9.3 17.1 10.7 14.5 10" fill="#e2ece6" stroke="#2a3030" stroke-width="1.5" stroke-linejoin="round"/><path d="M3.3 3.3L11.8 11.8" stroke="#2a3030" stroke-width="1.5"/><path d="M2.8 3.3L4.6 5" stroke="#2a3030" stroke-width="2.6" stroke-linecap="round"/><path d="M12.8 12.8L19.3 19.3" stroke="#2a3030" stroke-width="4.4" stroke-linecap="round"/><path d="M12.9 12.9L19.2 19.2" stroke="#3cb5d8" stroke-width="2" stroke-linecap="round"/></svg>
<svg class="a" style="left:68px;top:210.0px" width="24" height="24" viewBox="0 0 24 24"><path d="M11 11V14.3H8.3C6.4 14.3 5.4 15.8 5.4 17.8V19.5H19.6V17.8C19.6 15.8 18.6 14.3 16.7 14.3H14V11" fill="#fdfefd" stroke="#333" stroke-width="1.5" stroke-linejoin="round"/><rect x="9.4" y="3.2" width="6.3" height="8.6" rx="2.6" fill="#fdfefd" stroke="#333" stroke-width="1.5"/><rect x="11.7" y="10.5" width="1.7" height="4.5" fill="#fdfefd"/></svg>
<svg class="a" style="left:68px;top:237.0px" width="24" height="24" viewBox="0 0 24 24"><rect x="6.6" y="3.4" width="13" height="16.6" fill="#fcfbea" stroke="#3a3f44" stroke-width="1.5"/><rect x="7.3" y="4.1" width="2.4" height="15.2" fill="#cf8fa3"/><path d="M9.9 3.4V20" stroke="#3a3f44" stroke-width="1.3"/><path d="M11.6 7.4H16.9V9.6C16.9 11.4 15.8 12.3 14.25 12.3C12.7 12.3 11.6 11.4 11.6 9.6Z" fill="#c8bcc4" stroke="#333" stroke-width="1.2"/><path d="M12.3 10.9H16.2" stroke="#d9879e" stroke-width="1.2"/><path d="M14.25 12.3V15.8M12.4 16.4H16.1" stroke="#333" stroke-width="1.5"/></svg>
<svg class="a" style="left:68px;top:264.0px" width="24" height="24" viewBox="0 0 24 24"><rect x="5.8" y="4.8" width="13.6" height="15.2" fill="#f7b068" stroke="#2b3a42" stroke-width="1.5"/><rect x="6.5" y="5.5" width="2.1" height="13.8" fill="#e49a55"/><path d="M8.7 4.8V20" stroke="#2b3a42" stroke-width="1.2"/><rect x="10.8" y="6.7" width="5.8" height="3.8" fill="#fffbe8" stroke="#2b3a42" stroke-width="1.4"/></svg>
<svg class="a" style="left:68px;top:292.0px" width="24" height="24" viewBox="0 0 24 24"><rect x="6.6" y="3.4" width="13" height="16.6" fill="#fcfbea" stroke="#3a3f44" stroke-width="1.5"/><rect x="7.3" y="4.1" width="2.4" height="15.2" fill="#cf8fa3"/><path d="M9.9 3.4V20" stroke="#3a3f44" stroke-width="1.3"/><path d="M11.6 7.4H16.9V9.6C16.9 11.4 15.8 12.3 14.25 12.3C12.7 12.3 11.6 11.4 11.6 9.6Z" fill="#c8bcc4" stroke="#333" stroke-width="1.2"/><path d="M12.3 10.9H16.2" stroke="#d9879e" stroke-width="1.2"/><path d="M14.25 12.3V15.8M12.4 16.4H16.1" stroke="#333" stroke-width="1.5"/></svg>
<svg class="a" style="left:68px;top:319.0px" width="24" height="24" viewBox="0 0 24 24"><polygon points="12.8,4.1 20.5,4.1 20.5,11 11.3,20.2 4.3,13.5" fill="#d6f38f" stroke="#6aa21e" stroke-width="1.5" stroke-linejoin="round"/><circle cx="16.7" cy="8" r="1" fill="#6a8f30"/></svg>
<svg class="a" style="left:68px;top:346.5px" width="24" height="24" viewBox="0 0 24 24"><polygon points="12.8,4.1 20.5,4.1 20.5,11 11.3,20.2 4.3,13.5" fill="#d6f38f" stroke="#6aa21e" stroke-width="1.5" stroke-linejoin="round"/><circle cx="16.7" cy="8" r="1" fill="#6a8f30"/></svg>
<svg class="a" style="left:68px;top:374.0px" width="24" height="24" viewBox="0 0 24 24"><rect x="5.8" y="4.8" width="13.6" height="15.2" fill="#f7b068" stroke="#2b3a42" stroke-width="1.5"/><rect x="6.5" y="5.5" width="2.1" height="13.8" fill="#e49a55"/><path d="M8.7 4.8V20" stroke="#2b3a42" stroke-width="1.2"/><rect x="10.8" y="6.7" width="5.8" height="3.8" fill="#fffbe8" stroke="#2b3a42" stroke-width="1.4"/></svg>
<svg class="a" style="left:68px;top:402.5px" width="24" height="24" viewBox="0 0 24 24"><rect x="5.5" y="2.6" width="14" height="16.7" fill="#c5f2f5" stroke="#4f8e96" stroke-width="1.5"/><rect x="6.2" y="3.3" width="2.6" height="15.3" fill="#a6dbe0"/><path d="M8.9 2.6V19.3" stroke="#4f8e96" stroke-width="1.3"/><circle cx="13.6" cy="8.4" r="1.5" fill="#3f7a80"/><path d="M11.2 14.6C11.2 12.4 12.2 11.3 13.6 11.3C15 11.3 16 12.4 16 14.6Z" fill="#3f7a80"/></svg>
<svg class="a" style="left:68px;top:428.5px" width="24" height="24" viewBox="0 0 24 24"><rect x="5.8" y="4.8" width="13.6" height="15.2" fill="#f7b068" stroke="#2b3a42" stroke-width="1.5"/><rect x="6.5" y="5.5" width="2.1" height="13.8" fill="#e49a55"/><path d="M8.7 4.8V20" stroke="#2b3a42" stroke-width="1.2"/><rect x="10.8" y="6.7" width="5.8" height="3.8" fill="#fffbe8" stroke="#2b3a42" stroke-width="1.4"/></svg>
<svg class="a" style="left:68px;top:456.0px" width="24" height="24" viewBox="0 0 24 24"><rect x="5.8" y="4.8" width="13.6" height="15.2" fill="#f7b068" stroke="#2b3a42" stroke-width="1.5"/><rect x="6.5" y="5.5" width="2.1" height="13.8" fill="#e49a55"/><path d="M8.7 4.8V20" stroke="#2b3a42" stroke-width="1.2"/><rect x="10.8" y="6.7" width="5.8" height="3.8" fill="#fffbe8" stroke="#2b3a42" stroke-width="1.4"/></svg>
<svg class="a" style="left:68px;top:484.0px" width="24" height="24" viewBox="0 0 24 24"><path d="M8.2 20.3H3.3V3.8H20V11.5" fill="#fdfa8a" stroke="#a7a010" stroke-width="1.6"/><path d="M3.3 7.7H20M6.8 2V5M15.5 2V5" stroke="#a7a010" stroke-width="1.6"/><path d="M9.5 17.3H5.8V10.5H13" fill="none" stroke="#a7a010" stroke-width="1.5"/><polygon points="15.60,10.10 17.19,14.12 21.50,14.38 18.17,17.13 19.24,21.32 15.60,19.00 11.96,21.32 13.03,17.13 9.70,14.38 14.01,14.12" fill="#fcf880" stroke="#a7a010" stroke-width="1.4" stroke-linejoin="round"/></svg>
<svg class="a" style="left:68px;top:511.0px" width="24" height="24" viewBox="0 0 24 24"><rect x="5.8" y="4.8" width="13.6" height="15.2" fill="#f7b068" stroke="#2b3a42" stroke-width="1.5"/><rect x="6.5" y="5.5" width="2.1" height="13.8" fill="#e49a55"/><path d="M8.7 4.8V20" stroke="#2b3a42" stroke-width="1.2"/><rect x="10.8" y="6.7" width="5.8" height="3.8" fill="#fffbe8" stroke="#2b3a42" stroke-width="1.4"/></svg>
<svg class="a" style="left:68px;top:539.0px" width="24" height="24" viewBox="0 0 24 24"><path d="M3 16V13.8C3 12.5 3.8 11.8 5 11.6V4.8C5 3.4 6 2.5 7.3 2.5H10.5" fill="none" stroke="#333" stroke-width="1.5"/><path d="M21.5 16V13.8C21.5 12.5 20.7 11.8 19.5 11.6V4.8C19.5 3.4 18.5 2.5 17.2 2.5H14" fill="none" stroke="#333" stroke-width="1.5"/><path d="M10.6 14.5V17.5H8C6.4 17.5 5.5 18.5 5.5 20V21.6H19V20C19 18.5 18.1 17.5 16.5 17.5H13.9V14.5" fill="#fdfefd" stroke="#333" stroke-width="1.5" stroke-linejoin="round"/><rect x="9.2" y="6.3" width="6" height="8.6" rx="2.5" fill="#fdfefd" stroke="#333" stroke-width="1.5"/><rect x="11.4" y="14" width="1.7" height="4" fill="#fdfefd"/></svg>
<svg class="a" style="left:68px;top:566.0px" width="24" height="24" viewBox="0 0 24 24"><path d="M4 19.6V3.4H11.9L15.7 7.2V9" fill="#fbfae8" stroke="#555" stroke-width="1.4"/><path d="M11.9 3.4V7.2H15.7" fill="#9a9a9a"/><rect x="12" y="9.5" width="7.8" height="3.9" fill="#fffbe0" stroke="#2a3a40" stroke-width="1.4"/><rect x="9.6" y="13.6" width="12.3" height="5.9" fill="#d9e0e0" stroke="#2a3a40" stroke-width="1.4"/><rect x="12" y="17.5" width="7.8" height="4.4" fill="#fffbe0" stroke="#2a3a40" stroke-width="1.4"/></svg>
<svg class="a" style="left:68px;top:593.5px" width="24" height="24" viewBox="0 0 24 24"><path d="M4 19.6V3.4H11.9L15.7 7.2V9" fill="#fbfae8" stroke="#555" stroke-width="1.4"/><path d="M11.9 3.4V7.2H15.7" fill="#9a9a9a"/><rect x="12" y="9.5" width="7.8" height="3.9" fill="#fffbe0" stroke="#2a3a40" stroke-width="1.4"/><rect x="9.6" y="13.6" width="12.3" height="5.9" fill="#d9e0e0" stroke="#2a3a40" stroke-width="1.4"/><rect x="12" y="17.5" width="7.8" height="4.4" fill="#fffbe0" stroke="#2a3a40" stroke-width="1.4"/></svg>
<svg class="a" style="left:72px;top:640px" width="18" height="6" viewBox="0 0 18 6"><rect x="1" y="1" width="16.5" height="4.3" rx="1" fill="#e12a4b"/><path d="M2.5 3.1H16" stroke="#ef8aa0" stroke-width="0.8"/></svg>
<div class="a" style="left:0px;top:0px;width:1144px;height:1px;background:#1d3747;"></div>
<div class="a" style="left:0px;top:0px;width:1px;height:905px;background:#1d3747;"></div>
<div class="a" style="left:0px;top:904px;width:1144px;height:1px;background:#1d3747;"></div>
<div class="a" style="left:1143px;top:0px;width:1px;height:8px;background:#1d3747;"></div>
</body></html>
